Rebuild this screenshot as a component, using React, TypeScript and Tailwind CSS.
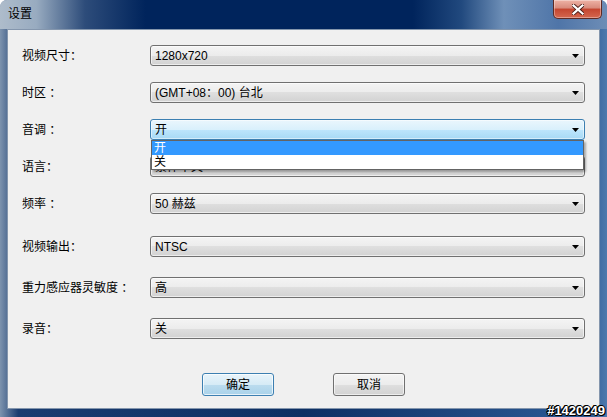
import { ReactNode } from 'react';

const font = { fontFamily: '"Liberation Sans", "Noto Sans CJK SC", sans-serif' };

function Arrow() {
  return (
    <svg width="7" height="4" viewBox="0 0 7 4" className="shrink-0">
      <path d="M0 0 H7 L3.5 4 Z" fill="#000" />
    </svg>
  );
}

function Combo({ value, focused, children }: { value: string; focused?: boolean; children?: ReactNode }) {
  return (
    <div className="relative h-[21px] w-[435px]">
      <div
        className={
          focused
            ? 'flex h-full items-center justify-between rounded-[3px] border border-[#3c7fb1] bg-[linear-gradient(#eaf6fd,#d9f0fc_50%,#bee6fd_50%,#a7d9f5)] pl-[4px] pr-[5px] shadow-[inset_0_0_0_1px_rgba(255,255,255,0.5)]'
            : 'flex h-full items-center justify-between rounded-[3px] border border-[#707070] bg-[linear-gradient(#f4f4f4,#ececec_50%,#dfdfdf_50%,#d2d2d2)] pl-[4px] pr-[5px] shadow-[inset_0_0_0_1px_rgba(255,255,255,0.6)]'
        }
      >
        <span className="text-[12px] leading-none text-black">{value}</span>
        <Arrow />
      </div>
      {children}
    </div>
  );
}

function Row({ label, value, focused, children }: { label: string; value: string; focused?: boolean; children?: ReactNode }) {
  return (
    <div className="flex items-center">
      <div className="w-[128px] text-[12px] leading-none text-black">{label}</div>
      <Combo value={value} focused={focused}>{children}</Combo>
    </div>
  );
}

export default function App() {
  return (
    <div className="relative h-[417px] w-[607px] overflow-hidden rounded-t-[7px] bg-[linear-gradient(to_right,#7d93ae,#1a3c70_3%,#0d2f63_50%,#2d5b96_97%,#4e79ad)]" style={font}>
      {/* title bar */}
      <div className="flex h-[29px] items-center justify-between bg-[linear-gradient(to_right,#aebccb,#98abc0_6%,#2d4c7a_14%,#00245c_24%,#00245c_68%,#21497e_76%,#6f90b8_83%,#4f75a8_92%,#6d8db6)] pl-[8px]">
        <span className="pb-[2px] text-[12px] text-black">设置</span>
        <div className="mr-[5px] flex h-[19px] w-[49px] items-center justify-center self-start rounded-b-[5px] border border-t-0 border-[#5e2a24] bg-[linear-gradient(#eeb3a6,#d88a7b_45%,#c4452f_50%,#d4674f)] shadow-[inset_0_0_0_1px_rgba(255,255,255,0.35)]">
          <svg width="12" height="11" viewBox="0 0 12 11">
            <path d="M1.5 1.5 L10.5 9.5 M10.5 1.5 L1.5 9.5" stroke="#4b1d17" strokeWidth="4" strokeLinecap="square" />
            <path d="M1.5 1.5 L10.5 9.5 M10.5 1.5 L1.5 9.5" stroke="#fff" strokeWidth="2.2" strokeLinecap="square" />
          </svg>
        </div>
      </div>

      {/* content */}
      <div className="mx-[7px] h-[380px] border border-[#8496ad] bg-[#f0f0f0] pl-[14px] pt-[15px]">
        <div className="flex flex-col gap-[16px]">
          <Row label="视频尺寸：" value="1280x720" />
          <Row label="时区 ：" value="(GMT+08：00) 台北" />
          <Row label="音调 ：" value="开" focused>
            <div className="absolute left-[1px] right-[1px] top-full z-10 border border-[#646464] bg-white text-[12px] leading-none shadow-[2px_2px_2px_rgba(0,0,0,0.3)]">
              <div className="flex h-[14px] items-center bg-[#3399ff] pl-[2px] text-white">开</div>
              <div className="flex h-[14px] items-center pl-[2px] text-black">关</div>
            </div>
          </Row>
          <Row label="语言：" value="繁体中文" />
          <Row label="频率 ：" value="50 赫兹" />
        </div>
        <div className="mt-[22px] flex flex-col gap-[20px]">
          <Row label="视频输出：" value="NTSC" />
          <Row label="重力感应器灵敏度 ：" value="高" />
          <Row label="录音：" value="关" />
        </div>
        <div className="mt-[34px] flex justify-center gap-[59px] pr-[14px]">
          <button className="h-[23px] w-[72px] rounded-[3px] border border-[#3c7fb1] bg-[linear-gradient(#e9f4fa,#d6ebf6_50%,#bcdcee_50%,#a9d2ea)] text-[12px] text-black shadow-[inset_0_0_0_1px_rgba(255,255,255,0.7)]">
            确定
          </button>
          <button className="h-[23px] w-[72px] rounded-[3px] border border-[#707070] bg-[linear-gradient(#f4f4f4,#ececec_50%,#dfdfdf_50%,#d2d2d2)] text-[12px] text-black shadow-[inset_0_0_0_1px_rgba(255,255,255,0.6)]">
            取消
          </button>
        </div>
      </div>

      <span className="absolute bottom-[0px] right-[2px] text-[13px] font-bold leading-none text-white [text-shadow:-1px_0_#000,1px_0_#000,0_-1px_#000,0_1px_#000,1px_1px_#000,-1px_-1px_#000]">
        #1420249
      </span>
    </div>
  );
}
